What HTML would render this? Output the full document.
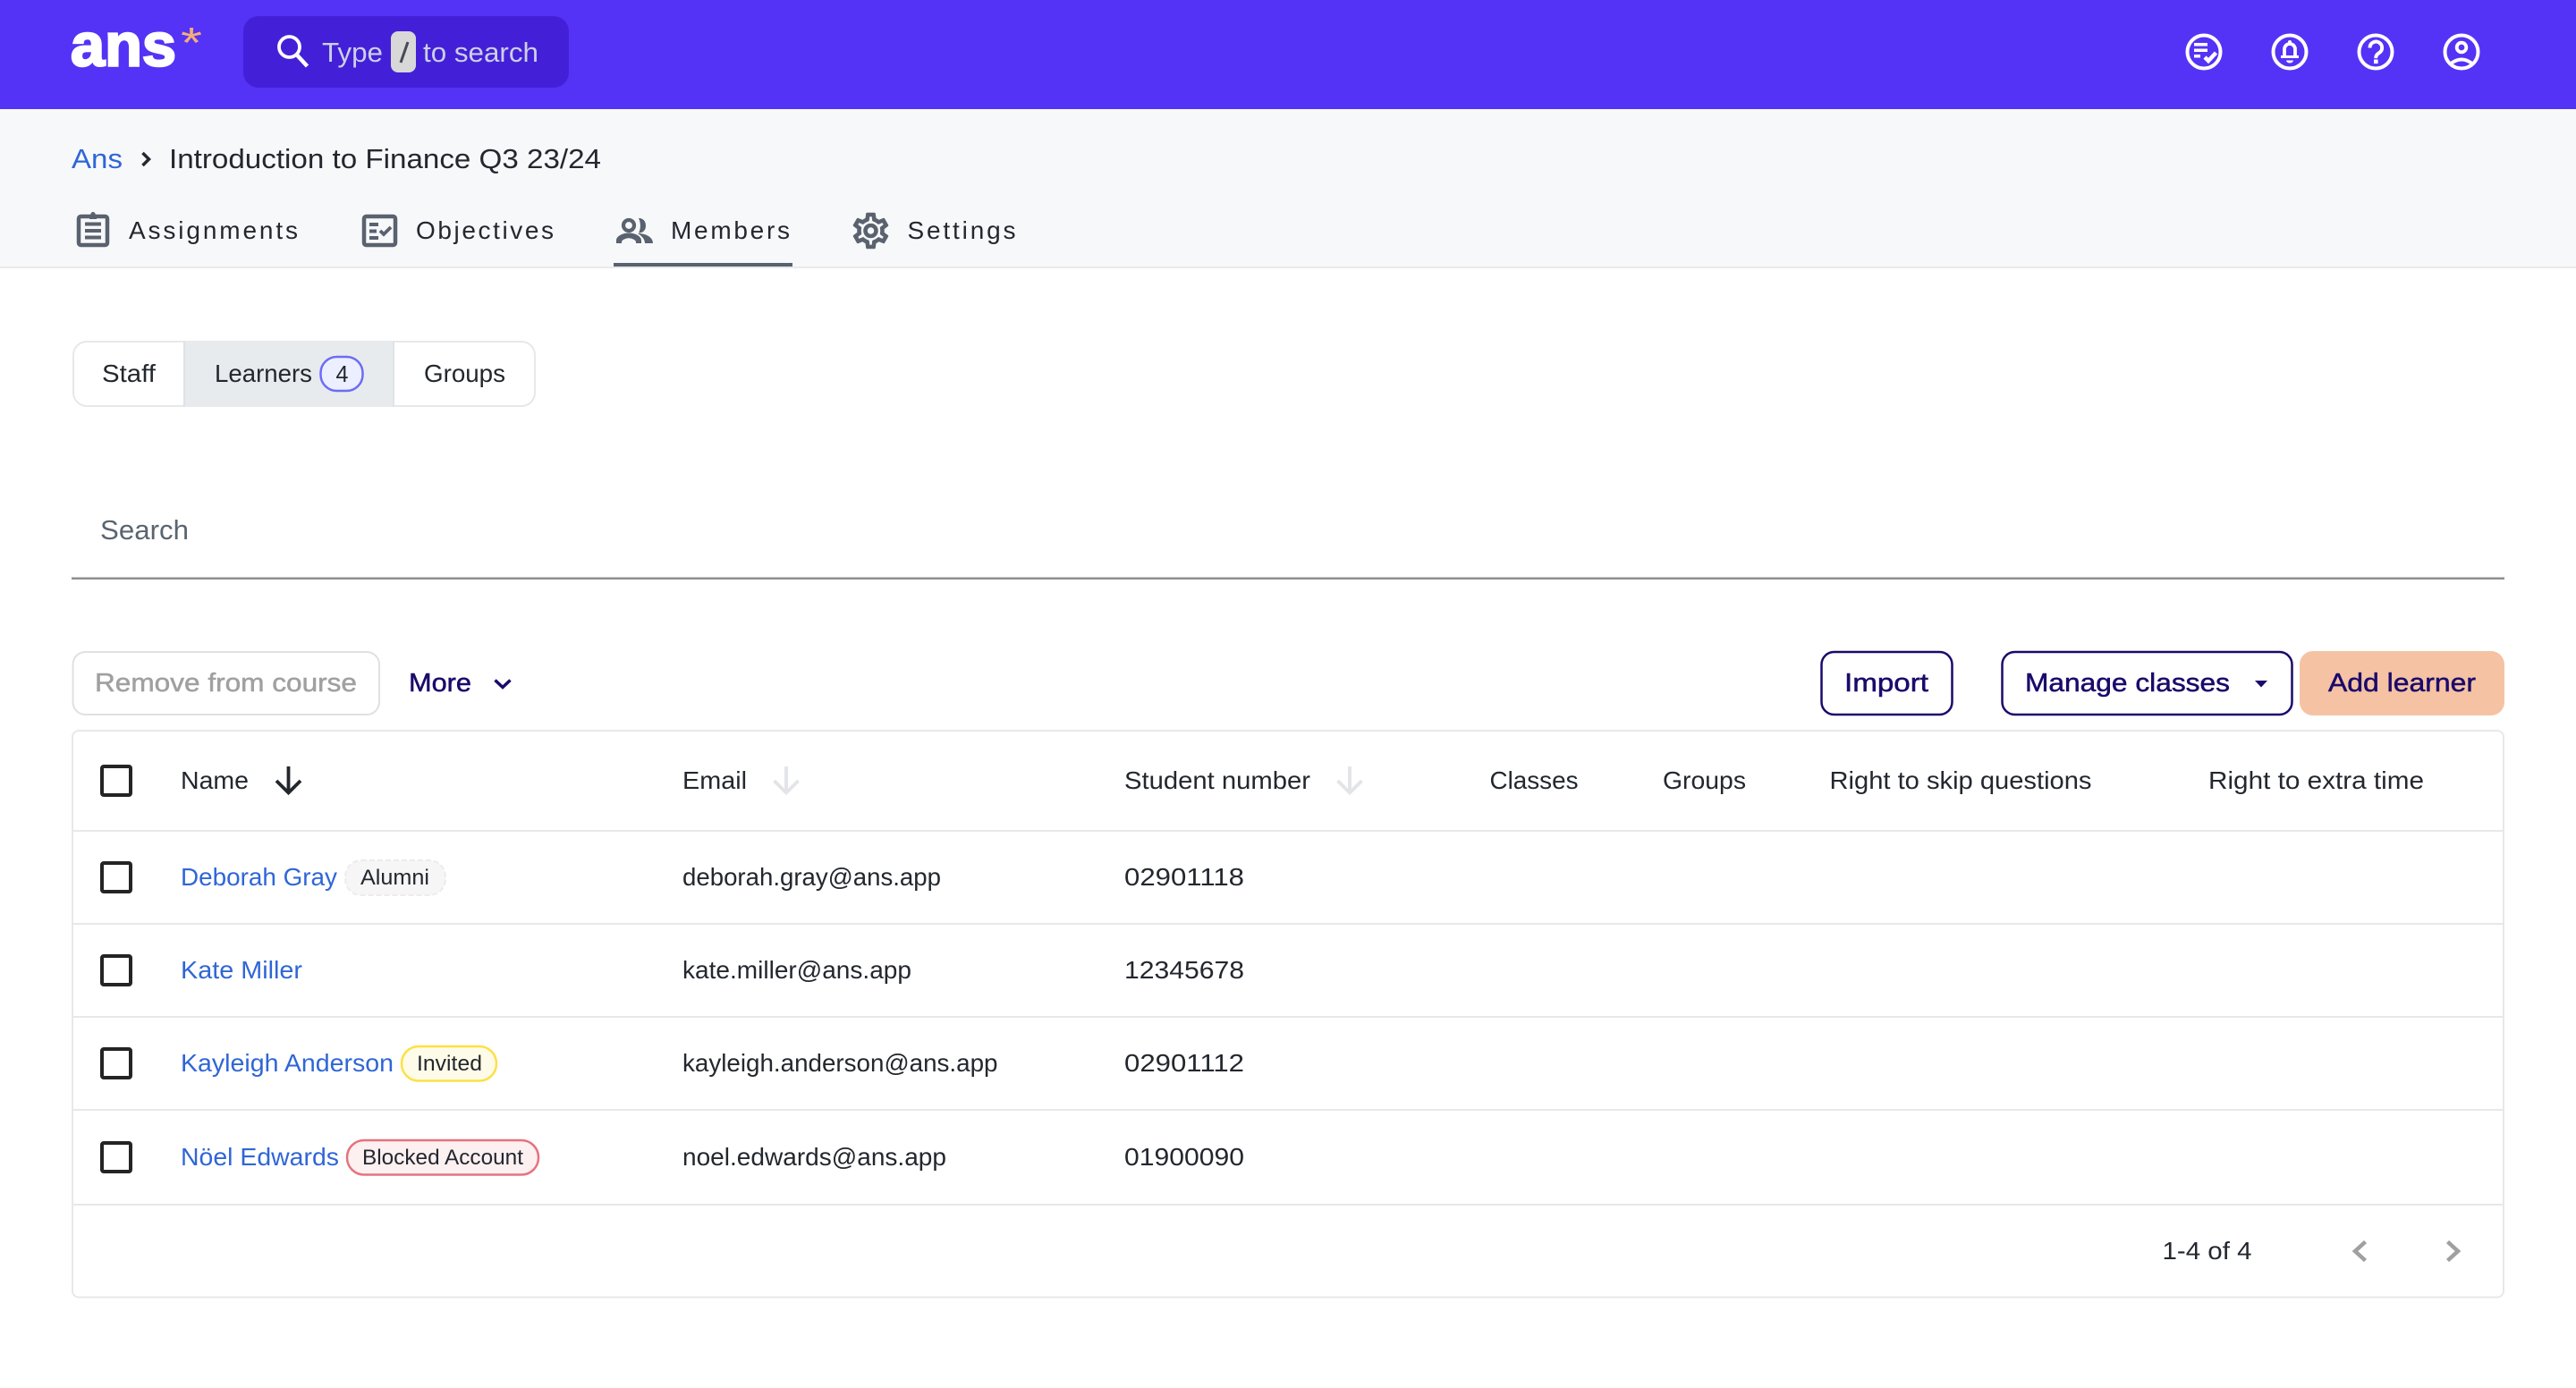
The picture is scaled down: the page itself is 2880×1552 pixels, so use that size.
<!DOCTYPE html>
<html lang="en">
<head>
<meta charset="utf-8">
<title>Members</title>
<style>
html,body{margin:0;padding:0;background:#fff;width:2880px;height:1552px;overflow:hidden}
svg{display:block}
text{font-family:"Liberation Sans",sans-serif;fill:#23272e;font-size:27.5px}
.b{font-size:28.5px;fill:#1a0a6b;stroke:#1a0a6b;stroke-width:.5px}
.t{font-size:28px}
.l{fill:#2f66d6}
.s{font-size:24.5px}
.tab{font-size:28px;fill:#23272e}
.top{font-size:31px}
</style>
</head>
<body>
<svg width="2880" height="1552" viewBox="0 0 2880 1552" xmlns="http://www.w3.org/2000/svg">
<rect width="2880" height="1552" fill="#fff"/>
<!-- top bar -->
<rect width="2880" height="122" fill="#5433f6"/>
<text x="79" y="73.500" textLength="118" lengthAdjust="spacingAndGlyphs" style="font-size:68px;font-weight:700;fill:#fff;stroke:#fff;stroke-width:2.5px">ans</text>
<text x="202" y="64" textLength="24" lengthAdjust="spacingAndGlyphs" style="font-size:48px;fill:#f4ad78">*</text>
<rect x="272" y="18" width="364" height="80" rx="17" fill="#4320d8"/>
<circle cx="323.500" cy="52.500" r="11.500" fill="none" stroke="#fff" stroke-width="3.800"/>
<path d="M331.500 61l12 13" stroke="#fff" stroke-width="4.500" fill="none"/>
<text x="360" y="69" textLength="68" lengthAdjust="spacingAndGlyphs" style="font-size:31px;fill:#cdcfe6">Type</text>
<rect x="437" y="35" width="28" height="46" rx="8" fill="#d8d8d8"/>
<path d="M456 47l-8 23" stroke="#454a55" stroke-width="3" fill="none"/>
<text x="473" y="69" textLength="129" lengthAdjust="spacingAndGlyphs" style="font-size:31px;fill:#cdcfe6">to search</text>
<g fill="none" stroke="#fff" stroke-width="4">
<circle cx="2464" cy="58" r="18.500"/><circle cx="2560" cy="58" r="18.500"/><circle cx="2656" cy="58" r="18.500"/><circle cx="2752" cy="58" r="18.500"/>
</g>
<path d="M2453 48h15v3.500h-15zM2453 54.500h15v3.500h-15zM2453 61h7v3.500h-7z" fill="#fff"/>
<path d="M2465 64l4 4 8.500-9" fill="none" stroke="#fff" stroke-width="4.500"/>
<path d="M2554 63v-8a6 6 0 0 1 12 0v8" fill="none" stroke="#fff" stroke-width="3.800"/>
<circle cx="2560" cy="47" r="2" fill="#fff"/>
<path d="M2550 62h20v3h-20zM2556 67.500h8a4 3 0 0 1-8 0z" fill="#fff"/>
<path d="M2649.500 53.500a6.800 6.800 0 1 1 10.500 5.600c-2.500 1.700-3.800 2.800-3.800 6" fill="none" stroke="#fff" stroke-width="4"/>
<rect x="2654" y="66.500" width="4.600" height="4.600" fill="#fff"/>
<circle cx="2752" cy="53" r="5.300" fill="none" stroke="#fff" stroke-width="3.800"/>
<path d="M2739 72Q2752 61 2765 72" fill="none" stroke="#fff" stroke-width="3.800"/>

<!-- sub-header -->
<rect y="122" width="2880" height="176" fill="#f7f8fa"/>
<rect y="298" width="2880" height="2" fill="#e8e9eb"/>
<text x="80" y="188" textLength="57" lengthAdjust="spacingAndGlyphs" class="top l">Ans</text>
<path d="M159.500 171l7 7-7 7" fill="none" stroke="#23272e" stroke-width="3.500"/>
<text x="189" y="188" textLength="483" lengthAdjust="spacingAndGlyphs" class="top">Introduction to Finance Q3 23/24</text>

<g fill="none" stroke="#59626e" stroke-width="4.500">
<rect x="88" y="242" width="32" height="32" rx="2.500"/>
<rect x="407" y="242" width="35" height="32" rx="2.500"/>
</g>
<path d="M100 243a4 5 0 0 1 8 0v2h-8z" fill="#59626e"/><circle cx="104" cy="239.500" r="2.500" fill="#59626e"/>
<path d="M95 248.500h18v4H95zM95 256h18v4H95zM95 263.500h18v4H95z" fill="#59626e"/>
<path d="M413 249h10v4h-10zM413 256.500h8v4h-8zM413 264h10v4h-10z" fill="#59626e"/>
<path d="M425 258l4 4 8-8" fill="none" stroke="#59626e" stroke-width="3.800"/>
<circle cx="703" cy="252" r="6" fill="none" stroke="#59626e" stroke-width="4.200"/>
<path d="M714 244c5.500 0 8 3.800 8 8.500s-3 8-8 8c2.500-4.800 2.500-11.500 0-16.500z" fill="#59626e"/>
<path d="M689 272v-3c0-5.500 8-8.500 14-8.500s14 3 14 8.500v3h-6v-1.500c0-2-4.500-4.300-8-4.300s-8 2.300-8 4.300v1.500z" fill="#59626e"/>
<path d="M713 261c8 0 17 3.500 17 11h-9c0-4-3-8-8-11z" fill="#59626e"/>
<g transform="translate(949.500 234) scale(2)"><path fill="#59626e" stroke="#59626e" stroke-width=".3" d="M19.430 12.980c.04-.32.07-.64.07-.98 0-.34-.03-.66-.07-.98l2.110-1.650c.19-.15.24-.42.12-.64l-2-3.460c-.09-.16-.26-.25-.44-.25-.06 0-.12.01-.17.03l-2.490 1c-.52-.4-1.080-.73-1.690-.98l-.38-2.650C14.460 2.180 14.250 2 14 2h-4c-.25 0-.46.18-.49.42l-.38 2.650c-.61.25-1.170.59-1.690.98l-2.490-1c-.06-.02-.12-.03-.18-.03-.17 0-.34.09-.43.25l-2 3.460c-.13.22-.07.49.12.64l2.110 1.650c-.04.32-.07.65-.07.98 0 .33.03.66.07.98l-2.110 1.650c-.19.15-.24.42-.12.64l2 3.460c.09.16.26.25.44.25.06 0 .12-.01.17-.03l2.490-1c.52.4 1.080.73 1.690.98l.38 2.650c.03.24.24.42.49.42h4c.25 0 .46-.18.49-.42l.38-2.650c.61-.25 1.170-.59 1.690-.98l2.490 1c.06.02.12.03.18.03.17 0 .34-.09.43-.25l2-3.460c.12-.22.07-.49-.12-.64l-2.110-1.650zm-1.980-1.710c.04.31.05.52.05.73 0 .21-.02.43-.05.73l-.14 1.130.89.7 1.080.84-.7 1.210-1.270-.51-1.040-.42-.9.68c-.43.32-.84.56-1.250.73l-1.060.43-.16 1.130-.2 1.350h-1.400l-.19-1.350-.16-1.130-1.060-.43c-.43-.18-.83-.41-1.230-.71l-.91-.7-1.060.43-1.270.51-.7-1.210 1.080-.84.89-.7-.14-1.130c-.03-.31-.05-.54-.05-.74s.02-.43.05-.73l.14-1.130-.89-.7-1.080-.84.7-1.210 1.270.51 1.040.42.9-.68c.43-.32.84-.56 1.250-.73l1.060-.43.160-1.130.2-1.350h1.390l.19 1.350.16 1.130 1.060.43c.43.18.83.41 1.230.71l.91.7 1.060-.43 1.270-.51.7 1.210-1.070.85-.89.7.14 1.130zM12 8c-2.210 0-4 1.790-4 4s1.790 4 4 4 4-1.790 4-4-1.790-4-4-4zm0 6c-1.100 0-2-.9-2-2s.9-2 2-2 2 .9 2 2-.9 2-2 2z"/></g>
<text x="144" y="267" textLength="189" lengthAdjust="spacing" class="tab">Assignments</text>
<text x="465" y="267" textLength="154" lengthAdjust="spacing" class="tab">Objectives</text>
<text x="750" y="267" textLength="133" lengthAdjust="spacing" class="tab">Members</text>
<text x="1014.500" y="267" textLength="121" lengthAdjust="spacing" class="tab">Settings</text>
<rect x="686" y="294" width="200" height="4" fill="#59626e"/>

<!-- segmented -->
<rect x="82" y="382" width="516" height="72" rx="15" fill="#fff" stroke="#e6e8ea" stroke-width="2"/>
<rect x="206" y="381" width="234" height="74" fill="#e8ebee"/>
<path d="M206 381v74M440 381v74" stroke="#dfe3e7" stroke-width="2"/>
<text x="114" y="427" textLength="60" lengthAdjust="spacingAndGlyphs" class="t">Staff</text>
<text x="240" y="427" textLength="109" lengthAdjust="spacingAndGlyphs" class="t">Learners</text>
<rect x="358.500" y="399" width="47" height="38" rx="18" fill="#ecefff" stroke="#6c6cf6" stroke-width="2.500"/>
<text x="375.500" y="427" textLength="14" lengthAdjust="spacingAndGlyphs" style="font-size:26px">4</text>
<text x="474" y="427" textLength="91" lengthAdjust="spacingAndGlyphs" class="t">Groups</text>

<!-- search -->
<text x="112" y="603" textLength="99" lengthAdjust="spacingAndGlyphs" style="font-size:31px;fill:#5b6570">Search</text>
<rect x="80" y="645.500" width="2720" height="2.500" fill="#8f8f8f"/>

<!-- toolbar -->
<rect x="81.500" y="729" width="342.500" height="70" rx="14" fill="#fff" stroke="#e0e0e0" stroke-width="2"/>
<text x="106" y="773" textLength="293" lengthAdjust="spacingAndGlyphs" class="b" style="fill:#a0a0a0;stroke:#a0a0a0">Remove from course</text>
<text x="457" y="773" textLength="70" lengthAdjust="spacingAndGlyphs" class="b">More</text>
<path d="M553.500 760.500l8.500 8 8.500-8" fill="none" stroke="#1a0a6b" stroke-width="3.500"/>
<rect x="2036.500" y="729" width="146" height="70" rx="14" fill="#fff" stroke="#1a0a6b" stroke-width="2.500"/>
<text x="2062" y="773" textLength="94" lengthAdjust="spacingAndGlyphs" class="b">Import</text>
<rect x="2238.500" y="729" width="324" height="70" rx="14" fill="#fff" stroke="#1a0a6b" stroke-width="2.500"/>
<text x="2264" y="773" textLength="229" lengthAdjust="spacingAndGlyphs" class="b">Manage classes</text>
<path d="M2521 761h14l-7 7.500z" fill="#1a0a6b"/>
<rect x="2571" y="728" width="229" height="72" rx="15" fill="#f5c3a3"/>
<text x="2603" y="773" textLength="165" lengthAdjust="spacingAndGlyphs" class="b">Add learner</text>

<!-- table -->
<rect x="81" y="817" width="2718" height="633.500" rx="7" fill="#fff" stroke="#e8e8e8" stroke-width="2"/>
<g fill="#e8e8e8">
<rect x="81" y="928" width="2718" height="2"/><rect x="81" y="1032" width="2718" height="2"/><rect x="81" y="1136" width="2718" height="2"/><rect x="81" y="1240" width="2718" height="2"/><rect x="81" y="1346" width="2718" height="2"/>
</g>
<g fill="none" stroke="#242424" stroke-width="4">
<rect x="114" y="857" width="32" height="32" rx="2"/><rect x="114" y="965" width="32" height="32" rx="2"/><rect x="114" y="1069" width="32" height="32" rx="2"/><rect x="114" y="1173" width="32" height="32" rx="2"/><rect x="114" y="1278" width="32" height="32" rx="2"/>
</g>
<text x="202" y="882" textLength="76" lengthAdjust="spacingAndGlyphs">Name</text>
<path d="M322.500 857v29M309 873l13.500 13.500L336 873" fill="none" stroke="#23272e" stroke-width="3.800"/>
<text x="763" y="882" textLength="72" lengthAdjust="spacingAndGlyphs">Email</text>
<path d="M879 857v29M865.500 873l13.500 13.500L892.500 873" fill="none" stroke="#e2e4e8" stroke-width="3.800"/>
<text x="1257" y="882" textLength="208" lengthAdjust="spacingAndGlyphs">Student number</text>
<path d="M1509 857v29M1495.500 873l13.500 13.500L1522.500 873" fill="none" stroke="#e2e4e8" stroke-width="3.800"/>
<text x="1665.500" y="882" textLength="99" lengthAdjust="spacingAndGlyphs">Classes</text>
<text x="1859" y="882" textLength="93" lengthAdjust="spacingAndGlyphs">Groups</text>
<text x="2045.500" y="882" textLength="293" lengthAdjust="spacingAndGlyphs">Right to skip questions</text>
<text x="2469" y="882" textLength="241" lengthAdjust="spacingAndGlyphs">Right to extra time</text>

<text x="202" y="990" textLength="175" lengthAdjust="spacingAndGlyphs" class="l">Deborah Gray</text>
<rect x="386" y="962" width="112" height="39" rx="18" fill="#f6f6f6" stroke="#ececec" stroke-width="2" stroke-dasharray="6 3"/>
<text x="403" y="989" textLength="77" lengthAdjust="spacingAndGlyphs" class="s">Alumni</text>
<text x="763" y="990" textLength="289" lengthAdjust="spacingAndGlyphs">deborah.gray@ans.app</text>
<text x="1257" y="990" textLength="134" lengthAdjust="spacingAndGlyphs">02901118</text>

<text x="202" y="1094" textLength="136" lengthAdjust="spacingAndGlyphs" class="l">Kate Miller</text>
<text x="763" y="1094" textLength="256" lengthAdjust="spacingAndGlyphs">kate.miller@ans.app</text>
<text x="1257" y="1094" textLength="134" lengthAdjust="spacingAndGlyphs">12345678</text>

<text x="202" y="1198" textLength="238" lengthAdjust="spacingAndGlyphs" class="l">Kayleigh Anderson</text>
<rect x="449" y="1170" width="106" height="38.500" rx="19" fill="#fefce8" stroke="#fde047" stroke-width="2.500"/>
<text x="466" y="1197" textLength="73" lengthAdjust="spacingAndGlyphs" class="s">Invited</text>
<text x="763" y="1198" textLength="352.500" lengthAdjust="spacingAndGlyphs">kayleigh.anderson@ans.app</text>
<text x="1257" y="1198" textLength="134" lengthAdjust="spacingAndGlyphs">02901112</text>

<text x="202" y="1303" textLength="177" lengthAdjust="spacingAndGlyphs" class="l">Nöel Edwards</text>
<rect x="388" y="1275" width="214" height="38.500" rx="19" fill="#fdf0f1" stroke="#e5737f" stroke-width="2.500"/>
<text x="405" y="1302" textLength="180" lengthAdjust="spacingAndGlyphs" class="s">Blocked Account</text>
<text x="763" y="1303" textLength="295" lengthAdjust="spacingAndGlyphs">noel.edwards@ans.app</text>
<text x="1257" y="1303" textLength="134" lengthAdjust="spacingAndGlyphs">01900090</text>

<text x="2417.500" y="1408" textLength="100" lengthAdjust="spacingAndGlyphs">1-4 of 4</text>
<path d="M2644.500 1388.500l-11.500 10.500 11.500 10.500M2736.500 1388.500l11.500 10.500-11.500 10.500" fill="none" stroke="#a0a0a0" stroke-width="4.500"/>
</svg>
</body>
</html>
